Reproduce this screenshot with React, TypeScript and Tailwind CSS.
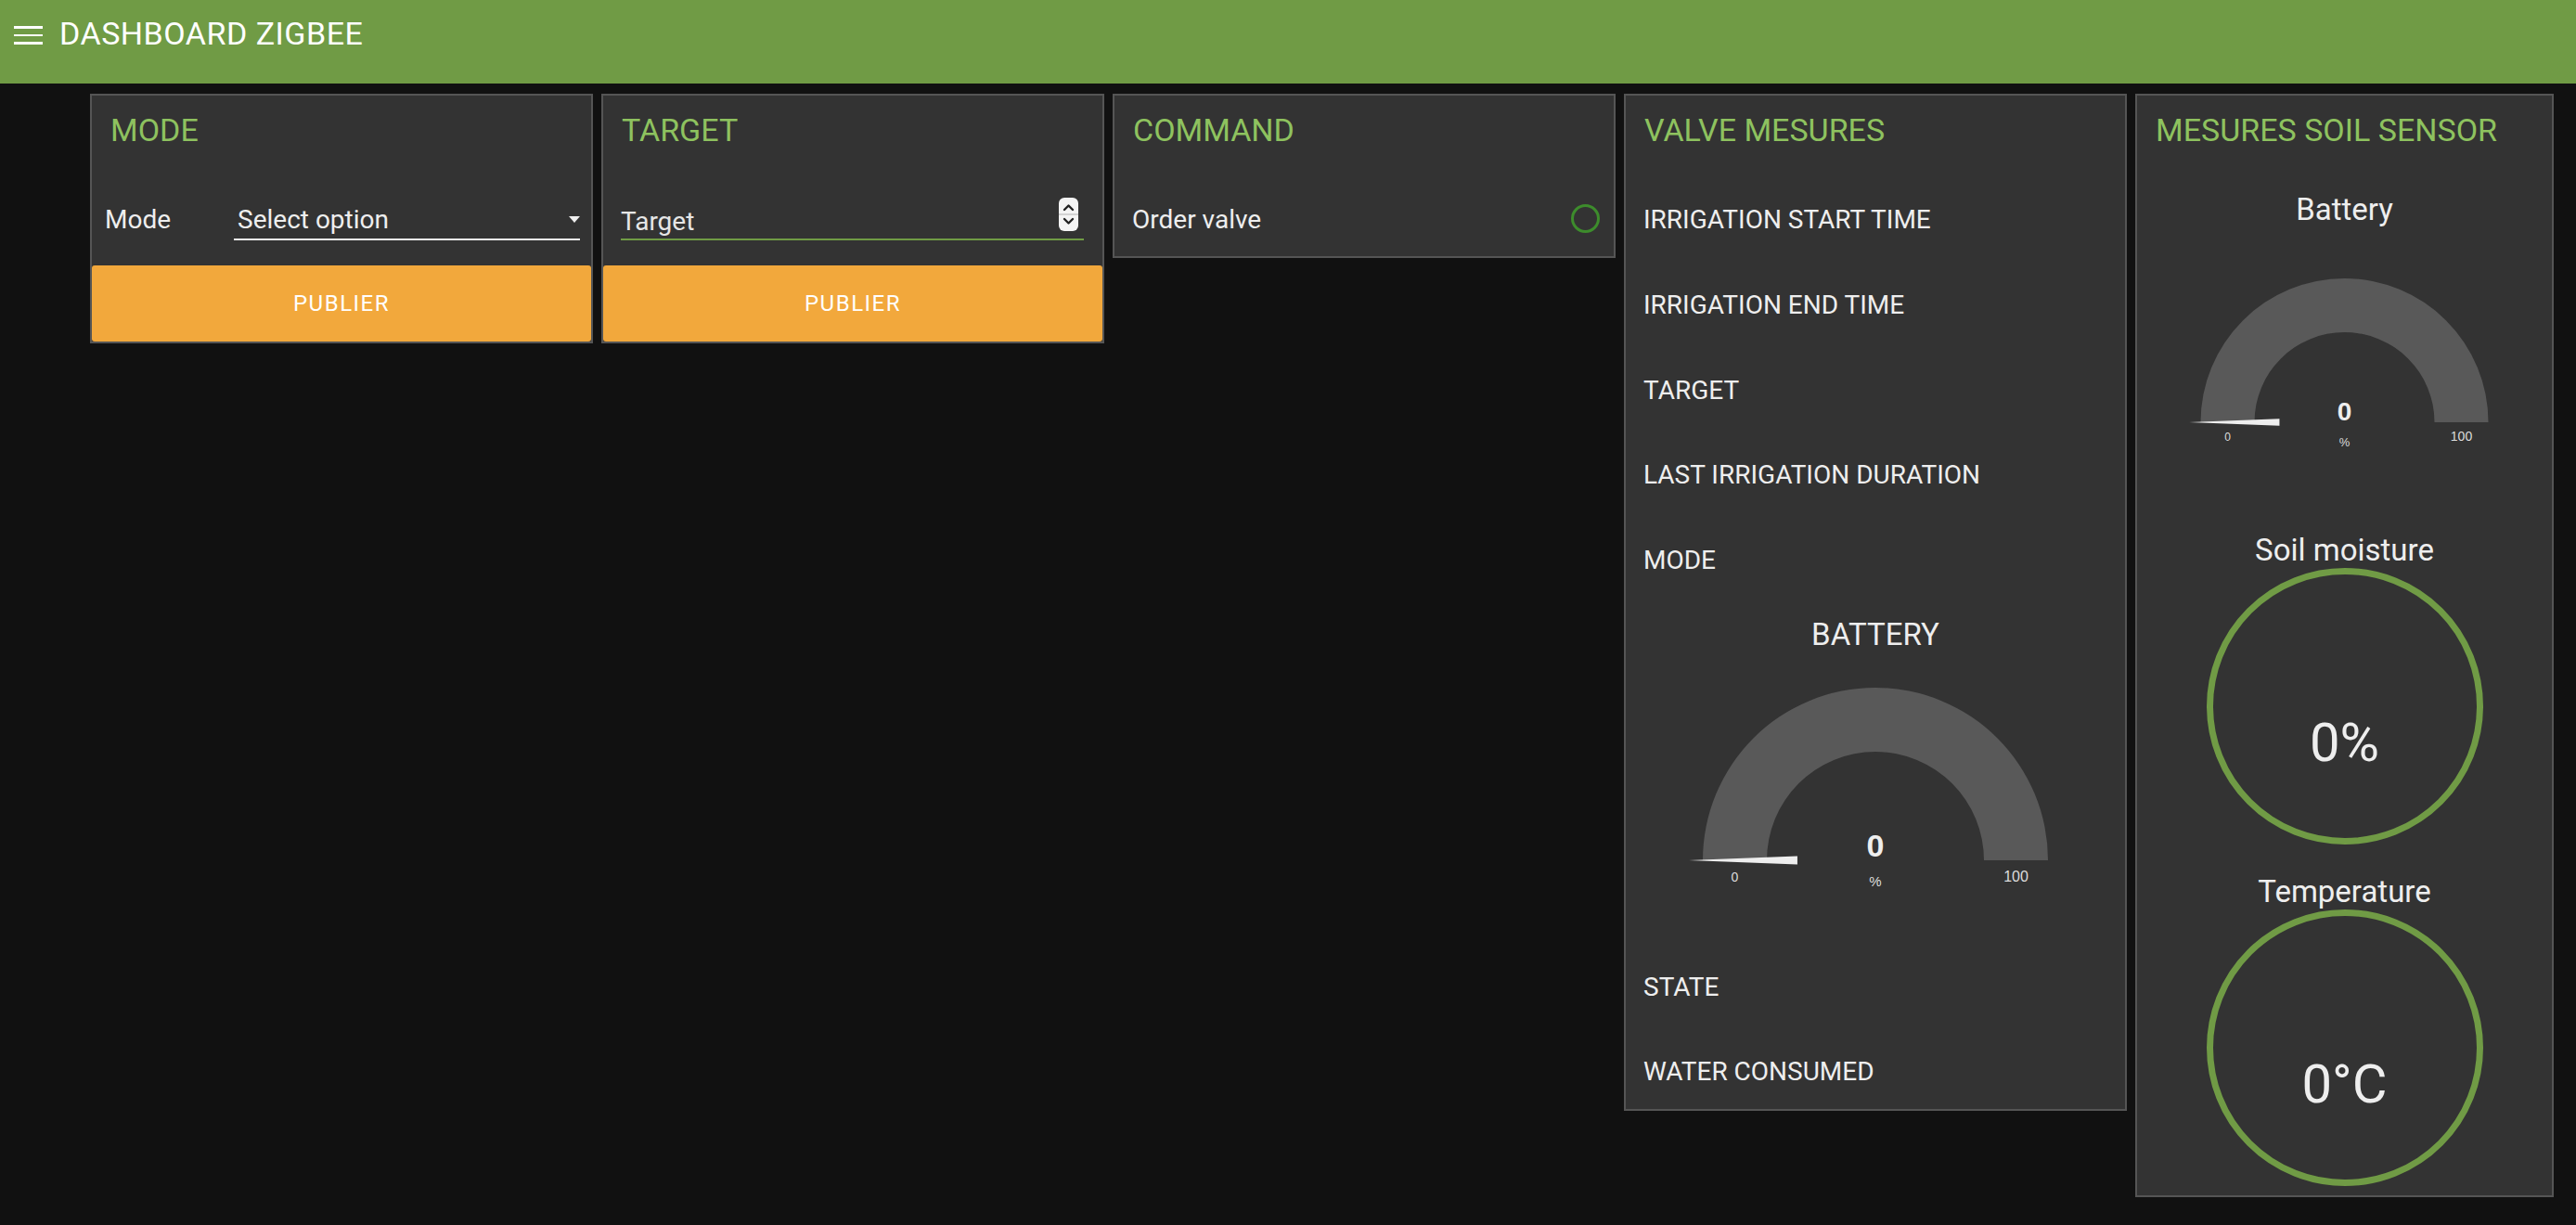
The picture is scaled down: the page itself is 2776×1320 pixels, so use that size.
import React from 'react';

const ROW = 'h-[81.6px] shrink-0 flex items-center';

function Card({ title, className, children }: { title: string; className: string; children: React.ReactNode }) {
  return (
    <div className={`${className} shrink-0 border-2 border-[#555] bg-[#333] flex flex-col gap-[10.2px]`}>
      <div className="h-[81.5px] shrink-0 pt-[17px] pl-[20px] text-[34px] leading-[40px] text-[#8ec25f]">{title}</div>
      {children}
    </div>
  );
}

function TextRow({ label }: { label: string }) {
  return <div className={`${ROW} pl-[19px] pt-[3px] text-[28px] text-[#eee]`}>{label}</div>;
}

function PublishButton() {
  return (
    <button className={`${ROW} w-full justify-center rounded-[3px] bg-[#f2a83c] text-[24px] font-normal tracking-[1.5px] text-white`}>
      PUBLIER
    </button>
  );
}

type GaugeProps = {
  title: string;
  width: number;
  mt: string;
  svgH: number;
  cy: number;
  R: number;
  r: number;
  valueSize: number;
  valueDy: number;
  unitSize: number;
  unitDy: number;
  minSize: number;
  maxSize: number;
  labelDy: number;
};

function Gauge(p: GaugeProps) {
  const cx = p.width / 2;
  const arc = `M ${cx - p.R} ${p.cy} A ${p.R} ${p.R} 0 0 1 ${cx + p.R} ${p.cy} L ${cx + p.r} ${p.cy} A ${p.r} ${p.r} 0 0 0 ${cx - p.r} ${p.cy} Z`;
  const tip = cx - p.R * 1.08;
  const base = cx - p.R * 0.452;
  const half = p.R * 0.024;
  const mid = (p.R + p.r) / 2;
  return (
    <div className="h-[357.6px] shrink-0 flex flex-col items-center">
      <div className={`${p.mt} text-[33px] leading-[39px] text-[#eee]`}>{p.title}</div>
      <svg width={p.width} height={p.svgH} className="block" style={{ fontFamily: '"Liberation Sans", Arial, sans-serif' }}>
        <path d={arc} fill="#595959" />
        <polygon points={`${tip},${p.cy} ${base},${p.cy - half} ${base},${p.cy + half}`} fill="#eeeeee" />
        <text x={cx} y={p.cy + p.valueDy} textAnchor="middle" fontSize={p.valueSize} fontWeight="bold" fill="#eeeeee">0</text>
        <text x={cx} y={p.cy + p.unitDy} textAnchor="middle" fontSize={p.unitSize} fill="#dddddd">%</text>
        <text x={cx - mid} y={p.cy + p.labelDy} textAnchor="middle" fontSize={p.minSize} fill="#dddddd">0</text>
        <text x={cx + mid} y={p.cy + p.labelDy} textAnchor="middle" fontSize={p.maxSize} fill="#dddddd">100</text>
      </svg>
    </div>
  );
}

function Ring({ title, value }: { title: string; value: string }) {
  return (
    <div className="h-[357.6px] shrink-0 flex flex-col items-center">
      <div className="mt-[10.6px] text-[33px] leading-[39px] text-[#eee]">{title}</div>
      <div className="w-[298px] h-[298px] shrink-0 rounded-full border-[7.5px] border-[#709b45] flex items-center justify-center">
        <span className="pt-[78px] text-[58px] leading-[68px] font-normal text-[#eee]">{value}</span>
      </div>
    </div>
  );
}

export default function App() {
  return (
    <div className="min-h-screen bg-[#111111] font-['Roboto',sans-serif]">
      {/* toolbar */}
      <header className="h-[90px] bg-[#709b45]">
        <div className="h-[72px] flex items-center pl-[15px]">
          <div className="flex flex-col gap-[6px] w-[31px] mt-[4px]">
            <span className="h-[2.5px] bg-white" />
            <span className="h-[2.5px] bg-white" />
            <span className="h-[2.5px] bg-white" />
          </div>
          <h1 className="ml-[18px] text-[34px] leading-[40px] tracking-[0.5px] text-white">DASHBOARD ZIGBEE</h1>
        </div>
      </header>

      <main className="flex items-start gap-[9px] pl-[97px] pt-[11px]">
        {/* MODE */}
        <Card title="MODE" className="w-[542px]">
          <div className={`${ROW} pl-[14px] pr-[12px] text-[28px] text-[#eee]`}>
            <span className="w-[139px] shrink-0 pt-[3px]">Mode</span>
            <div className="flex-1 h-[40px] mt-[7px] pb-[5px] pl-[4px] border-b-2 border-[#eee] flex items-center justify-between">
              <span className="leading-[33px] pt-[2px]">Select option</span>
              <svg width="12" height="7" viewBox="0 0 12 7" className="mt-[2px]">
                <polygon points="0,0 12,0 6,7" fill="#eeeeee" />
              </svg>
            </div>
          </div>
          <PublishButton />
        </Card>

        {/* TARGET */}
        <Card title="TARGET" className="w-[542px]">
          <div className={`${ROW} pl-[19px] pr-[20px]`}>
            <div className="relative flex-1 h-[40px] mt-[7px] pb-[5px] border-b-2 border-[#709b45] flex items-center">
              <span className="pt-[6px] text-[28px] leading-[33px] text-[#e6e6e6]">Target</span>
              <svg width="21" height="36" viewBox="0 0 21 36" className="absolute right-[6px] top-[-6px]">
                <rect x="0" y="0" width="21" height="36" rx="6" fill="#f4f4f4" />
                <line x1="0" y1="18" x2="21" y2="18" stroke="#c8c8c8" strokeWidth="1.5" />
                <polyline points="6,13 10.5,8.5 15,13" fill="none" stroke="#222" strokeWidth="2.4" strokeLinecap="round" strokeLinejoin="round" />
                <polyline points="6,23 10.5,27.5 15,23" fill="none" stroke="#222" strokeWidth="2.4" strokeLinecap="round" strokeLinejoin="round" />
              </svg>
            </div>
          </div>
          <PublishButton />
        </Card>

        {/* COMMAND */}
        <Card title="COMMAND" className="w-[542px]">
          <div className={`${ROW} justify-between pl-[19px] pr-[15px] text-[28px] text-[#eee]`}>
            <span className="pt-[3px]">Order valve</span>
            <span className="w-[31px] h-[31px] rounded-full border-[3px] border-[#3d8c2c]" />
          </div>
        </Card>

        {/* VALVE MESURES */}
        <Card title="VALVE MESURES" className="w-[542px]">
          <TextRow label="IRRIGATION START TIME" />
          <TextRow label="IRRIGATION END TIME" />
          <TextRow label="TARGET" />
          <TextRow label="LAST IRRIGATION DURATION" />
          <TextRow label="MODE" />
          <Gauge
            title="BATTERY"
            width={538}
            mt="mt-[10.3px]"
            svgH={308}
            cy={224}
            R={186}
            r={117}
            valueSize={34}
            valueDy={-4}
            unitSize={15}
            unitDy={28}
            minSize={14}
            maxSize={16}
            labelDy={23}
          />
          <TextRow label="STATE" />
          <TextRow label="WATER CONSUMED" />
        </Card>

        {/* MESURES SOIL SENSOR */}
        <Card title="MESURES SOIL SENSOR" className="w-[451px]">
          <Gauge
            title="Battery"
            width={447}
            mt="mt-[11.3px]"
            svgH={307}
            cy={210}
            R={155}
            r={97}
            valueSize={28}
            valueDy={-2}
            unitSize={13}
            unitDy={26}
            minSize={12}
            maxSize={14}
            labelDy={20}
          />
          <Ring title="Soil moisture" value="0%" />
          <Ring title="Temperature" value="0°C" />
        </Card>
      </main>
    </div>
  );
}
